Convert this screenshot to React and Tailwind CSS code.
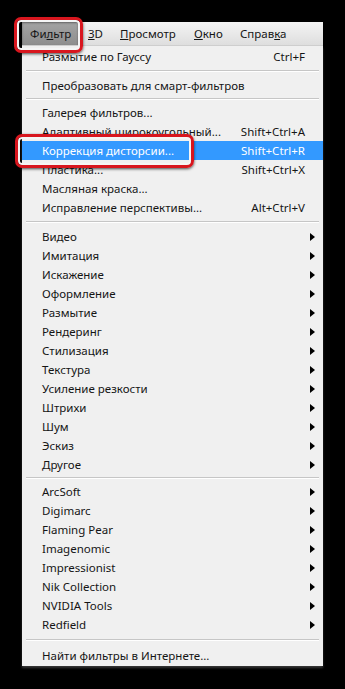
import React from 'react'

const font = { fontFamily: '"Noto Sans", "Liberation Sans", sans-serif' }

const sections = [
  [{ label: 'Размытие по Гауссу', key: 'Ctrl+F' }],
  [{ label: 'Преобразовать для смарт-фильтров' }],
  [
    { label: 'Галерея фильтров...' },
    { label: 'Адаптивный широкоугольный...', key: 'Shift+Ctrl+A' },
    { label: 'Коррекция дисторсии...', key: 'Shift+Ctrl+R', active: true },
    { label: 'Пластика...', key: 'Shift+Ctrl+X' },
    { label: 'Масляная краска...' },
    { label: 'Исправление перспективы...', key: 'Alt+Ctrl+V' },
  ],
  ['Видео', 'Имитация', 'Искажение', 'Оформление', 'Размытие', 'Рендеринг', 'Стилизация', 'Текстура',
    'Усиление резкости', 'Штрихи', 'Шум', 'Эскиз', 'Другое'].map((l) => ({ label: l, sub: true })),
  ['ArcSoft', 'Digimarc', 'Flaming Pear', 'Imagenomic', 'Impressionist', 'Nik Collection', 'NVIDIA Tools',
    'Redfield'].map((l) => ({ label: l, sub: true })),
  [{ label: 'Найти фильтры в Интернете...' }],
]

const sepHeights = ['h-[10px]', 'h-[8px]', 'h-[10px]', 'h-[8px]', 'h-[12px]']

const Arrow = () => (
  <svg width="5" height="8" viewBox="0 0 5 8">
    <path d="M0 0 L5 4 L0 8 Z" fill="#000" />
  </svg>
)

const Row = ({ item }) => (
  <div className={`flex items-center h-[19px] pl-[20px] pr-[4px] text-[11.5px] ${item.active ? 'bg-[#3399ff] text-white' : 'text-[#151515]'}`}>
    <span className="flex-1 whitespace-nowrap">{item.label}</span>
    {item.key && <span className="whitespace-nowrap">{item.key}</span>}
    <span className="w-[14px] flex items-center pl-[5px]">{item.sub && <Arrow />}</span>
  </div>
)

const Separator = ({ h }) => (
  <div className={`${h} flex flex-col justify-center px-[4px]`}>
    <div className="h-px bg-[#c6c6c6]" />
    <div className="h-px bg-white" />
  </div>
)

const App = () => {
  return (
    <div className="relative w-[345px] h-[689px] bg-black overflow-hidden" style={font}>

      {/* Menu panel */}
      <div className="ml-[22px] pt-[22px] w-[301px]">
        {/* Menu bar */}
        <div className="flex items-center h-[24px] bg-gradient-to-b from-[#f4f4f4] to-[#dedede] border-b border-[#cfcfcf] text-[11.5px] text-[#151515]">
          <div className="h-full flex items-center pl-[8px] w-[56px] bg-gradient-to-b from-[#a3a3a3] to-[#8e8e8e] shadow-[inset_0_1px_2px_rgba(0,0,0,0.4)]">
            Фи<span className="underline">л</span>ьтр
          </div>
          <span className="ml-[10px] w-[32px]"><span className="underline">3</span>D</span>
          <span className="w-[74px]"><span className="underline">П</span>росмотр</span>
          <span className="w-[46px]"><span className="underline">О</span>кно</span>
          <span>Справ<span className="underline">к</span>а</span>
        </div>

        {/* Items */}
        <div className="bg-[#f0f0f0] pt-[1px] pb-[1px] shadow-[0_2px_2px_rgba(90,90,90,0.6)]">
          {sections.map((sec, i) => (
            <React.Fragment key={i}>
              {i > 0 && <Separator h={sepHeights[i - 1]} />}
              {sec.map((item) => <Row key={item.label} item={item} />)}
            </React.Fragment>
          ))}
        </div>
      </div>

      {/* Red callout around Фильтр */}
      <div className="absolute left-[14px] top-[17px] w-[69px] h-[36px] rounded-[7px] border-[3px] border-[#d8161e] shadow-[inset_0_0_0_2px_#f5f5f5,0_1px_3px_rgba(0,0,0,0.7)]" />

      {/* Red callout around Коррекция дисторсии */}
      <div className="absolute left-[15px] top-[134px] w-[179px] h-[34px] rounded-[7px] border-[3px] border-[#d8161e] shadow-[inset_0_0_0_2px_#f5f5f5,0_1px_3px_rgba(0,0,0,0.7)]" />
    </div>
  )
}

export default App
